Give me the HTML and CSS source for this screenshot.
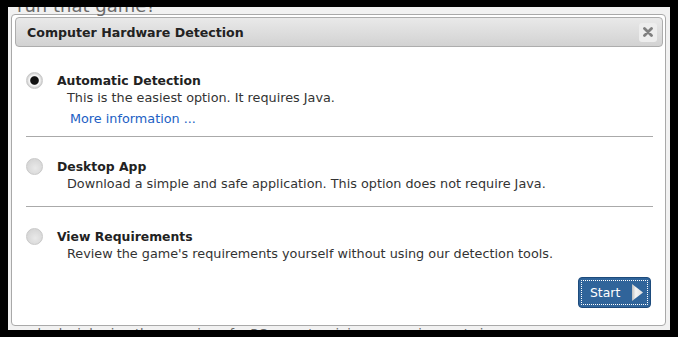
FILE: index.html
```html
<!DOCTYPE html>
<html lang="en">

<head>
    <meta charset="UTF-8" />
    <title>Computer Hardware Detection</title>
    <link rel="stylesheet" href="styles.css">
</head>

<body>
    <div class="page">
        <h2 class="page-title">run that game?</h2>

        <div class="dialog">
            <div class="dialog-header">
                <span class="dialog-title">Computer Hardware Detection</span>
                <a href="#" class="close-btn" title="Close">
                    <svg width="10" height="10" viewBox="0 0 10 10">
                        <path d="M1.5 1.5 L8.5 8.5 M8.5 1.5 L1.5 8.5" stroke="#7f7f7f" stroke-width="2.8" stroke-linecap="round" />
                    </svg>
                </a>
            </div>

            <div class="options">
                <div class="option first">
                    <span class="radio checked"></span>
                    <div class="option-text">
                        <div class="option-title">Automatic Detection</div>
                        <div class="option-desc">This is the easiest option. It requires Java.</div>
                        <a href="#" class="more-link">More information ...</a>
                    </div>
                </div>
                <div class="option">
                    <span class="radio"></span>
                    <div class="option-text">
                        <div class="option-title">Desktop App</div>
                        <div class="option-desc">Download a simple and safe application. This option does not require Java.</div>
                    </div>
                </div>
                <div class="option last">
                    <span class="radio"></span>
                    <div class="option-text">
                        <div class="option-title">View Requirements</div>
                        <div class="option-desc">Review the game's requirements yourself without using our detection tools.</div>
                    </div>
                </div>
            </div>

            <div class="dialog-footer">
                <button class="start-btn">
                    Start
                    <svg width="11" height="17" viewBox="0 0 11 17">
                        <defs>
                            <linearGradient id="tri" x1="0" y1="0" x2="1" y2="0">
                                <stop offset="0" stop-color="#bfbfbf" />
                                <stop offset="0.35" stop-color="#f4f4f4" />
                                <stop offset="1" stop-color="#dcdcdc" />
                            </linearGradient>
                        </defs>
                        <polygon points="0,0 11,8.5 0,17" fill="url(#tri)" />
                    </svg>
                </button>
            </div>
        </div>

        <p class="page-text">ough, deciphering the meaning of a PC game's minimum requirements is</p>
    </div>
</body>

</html>
```

FILE: styles.css
```css
body {
    margin: 0;
    background-color: #000;
    font-family: 'DejaVu Sans', Verdana, sans-serif;
}

.page {
    margin: 7px 8px 0;
    height: 323px;
    overflow: hidden;
    background-color: #f1f1f1;
}

.page-title {
    margin: -11px 0 0 9px;
    font-size: 18px;
    line-height: 20px;
    font-weight: normal;
    color: #6a6a6a;
}

.page-text {
    margin: 0 0 0 5px;
    font-size: 13px;
    line-height: 16px;
    color: #666;
}

.dialog {
    box-sizing: border-box;
    height: 312px;
    margin: -2px 4px 0 3px;
    padding: 2px 2px 0 3px;
    background-color: #fff;
    border: 1px solid #a9a9a9;
    border-radius: 4px;
    display: flex;
    flex-direction: column;
}

.dialog-header {
    box-sizing: border-box;
    height: 30px;
    padding: 0 5px 0 11px;
    border: 1px solid #adadad;
    border-radius: 4px;
    background: linear-gradient(#e9e9e9, #d2d2d2);
    display: flex;
    align-items: center;
    justify-content: space-between;
}

.dialog-title {
    font-size: 12.6px;
    font-weight: bold;
    color: #222;
}

.close-btn {
    width: 18px;
    height: 19px;
    border-radius: 3px;
    background-color: #ededed;
    display: flex;
    align-items: center;
    justify-content: center;
}

.options {
    padding: 5px 10px 0 11px;
}

.option {
    display: grid;
    grid-template-columns: 17px 1fr;
    column-gap: 14px;
    padding: 21px 0 14px;
    border-bottom: 1px solid #aaa;
}

.option.first {
    padding-top: 20px;
    padding-bottom: 9px;
}

.option.last {
    border-bottom: none;
    padding-bottom: 0;
}

.radio {
    width: 17px;
    height: 17px;
    box-sizing: border-box;
    border-radius: 50%;
    border: 1px solid #c9c9c9;
    background: radial-gradient(circle at 55% 60%, #e9e9e9, #cfcfcf);
}

.radio.checked {
    background: radial-gradient(circle, #111 0, #111 3.8px, #f6f6f6 4.8px, #f6f6f6 5.2px, #cfcfcf 7.5px);
}

.option-title {
    font-size: 12.4px;
    line-height: 17px;
    font-weight: bold;
    color: #222;
}

.option-desc {
    padding-left: 10px;
    font-size: 12.8px;
    line-height: 17px;
    color: #333;
}

.more-link {
    display: block;
    margin-top: 4px;
    padding-left: 13px;
    font-size: 12.8px;
    line-height: 17px;
    color: #2160c4;
    text-decoration: none;
}

.dialog-footer {
    display: flex;
    justify-content: flex-end;
    padding: 15px 12px 0 0;
}

.start-btn {
    box-sizing: border-box;
    width: 73px;
    height: 31px;
    padding: 0 7px 0 11px;
    border: 1px solid #1d4b7c;
    border-radius: 4px;
    background-color: #30649a;
    color: #fff;
    font-family: 'DejaVu Sans', Verdana, sans-serif;
    font-size: 12.4px;
    outline: 1px dotted #fff;
    outline-offset: -4px;
    display: flex;
    align-items: center;
    justify-content: space-between;
    cursor: pointer;
}
```
